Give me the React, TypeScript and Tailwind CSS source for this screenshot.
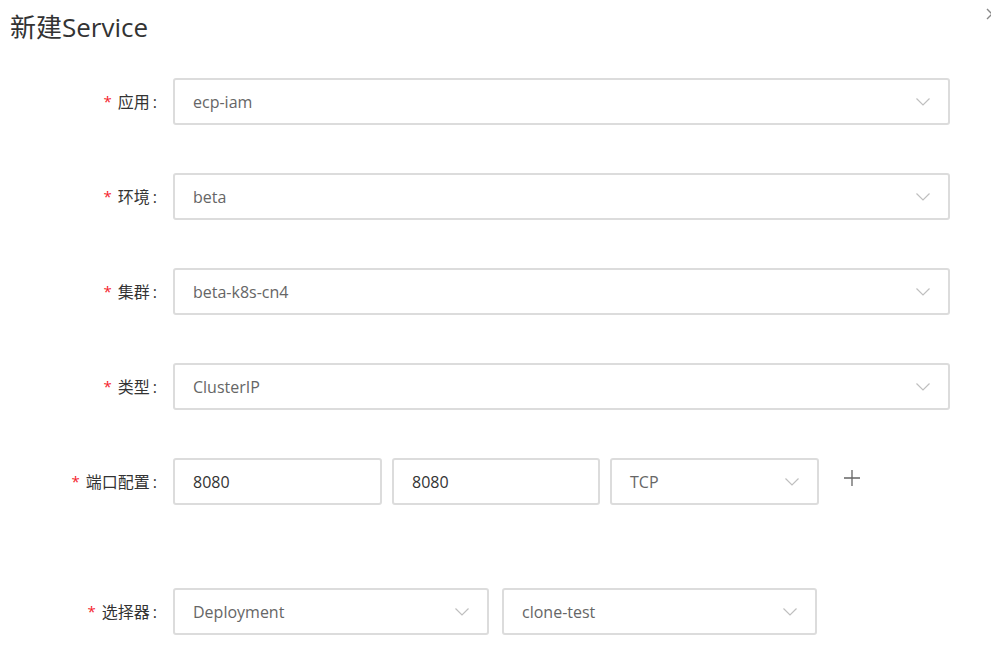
import React from 'react';

const font = { fontFamily: '"Open Sans", "Noto Sans CJK SC", sans-serif' };

const Chevron: React.FC = () => (
  <svg width="14" height="8" viewBox="0 0 14 8" fill="none" className="shrink-0">
    <path d="M0.5 0.5 L7 7 L13.5 0.5" stroke="#bfbfbf" strokeWidth="1.2" />
  </svg>
);

const Label: React.FC<{ text: string }> = ({ text }) => (
  <div className="w-[162px] shrink-0 pr-[5px] flex items-center justify-end text-[16px] text-[#333]">
    <span className="text-[#f5222d] mr-[6px] text-[15px] leading-none">*</span>
    <span>{text}</span>
    <span className="ml-[3px]">:</span>
  </div>
);

const Select: React.FC<{ value: string; className?: string }> = ({ value, className }) => (
  <div
    className={`h-[47px] border-2 border-[#dcdcdc] rounded-[3px] flex items-center justify-between pl-[18px] pr-[18px] text-[16px] text-[#666] bg-white ${className ?? ''}`}
  >
    <span>{value}</span>
    <Chevron />
  </div>
);

const Input: React.FC<{ value: string; className?: string }> = ({ value, className }) => (
  <div
    className={`h-[47px] border-2 border-[#dcdcdc] rounded-[3px] flex items-center pl-[18px] text-[16px] text-[#333] bg-white ${className ?? ''}`}
  >
    {value}
  </div>
);

const rows = [
  { label: '应用', value: 'ecp-iam' },
  { label: '环境', value: 'beta' },
  { label: '集群', value: 'beta-k8s-cn4' },
  { label: '类型', value: 'ClusterIP' },
];

const App: React.FC = () => {
  return (
    <div className="w-[991px] h-[648px] bg-white overflow-hidden relative" style={font}>
      <div className="pl-[10px] pt-[9px]">
        <h1 className="text-[26px] text-[#333] leading-[36px]">新建Service</h1>
      </div>
      {/* close icon, cut off by the right edge */}
      <svg width="12" height="12" viewBox="0 0 12 12" className="absolute left-[986px] top-[8px]">
        <path d="M1 1 L11 11 M11 1 L1 11" stroke="#888" strokeWidth="1.4" />
      </svg>
      <div className="flex flex-col mt-[33px]">
        {rows.map((r) => (
          <div key={r.label} className="flex items-center h-[47px] mb-[48px]">
            <Label text={r.label} />
            <div className="ml-[11px]">
              <Select value={r.value} className="w-[777px]" />
            </div>
          </div>
        ))}
        <div className="flex items-center h-[47px] mb-[83px]">
          <Label text="端口配置" />
          <div className="ml-[11px] flex items-center gap-[10px]">
            <Input value="8080" className="w-[209px]" />
            <Input value="8080" className="w-[208px]" />
            <Select value="TCP" className="w-[209px]" />
            <svg width="18" height="18" viewBox="0 0 18 18" className="ml-[14px] mb-[8px]">
              <path d="M9 1 V17 M1 9 H17" stroke="#666" strokeWidth="1.3" />
            </svg>
          </div>
        </div>
        <div className="flex items-center h-[47px]">
          <Label text="选择器" />
          <div className="ml-[11px] flex items-center gap-[13px]">
            <Select value="Deployment" className="w-[316px]" />
            <Select value="clone-test" className="w-[315px]" />
          </div>
        </div>
      </div>
    </div>
  );
};

export default App;
